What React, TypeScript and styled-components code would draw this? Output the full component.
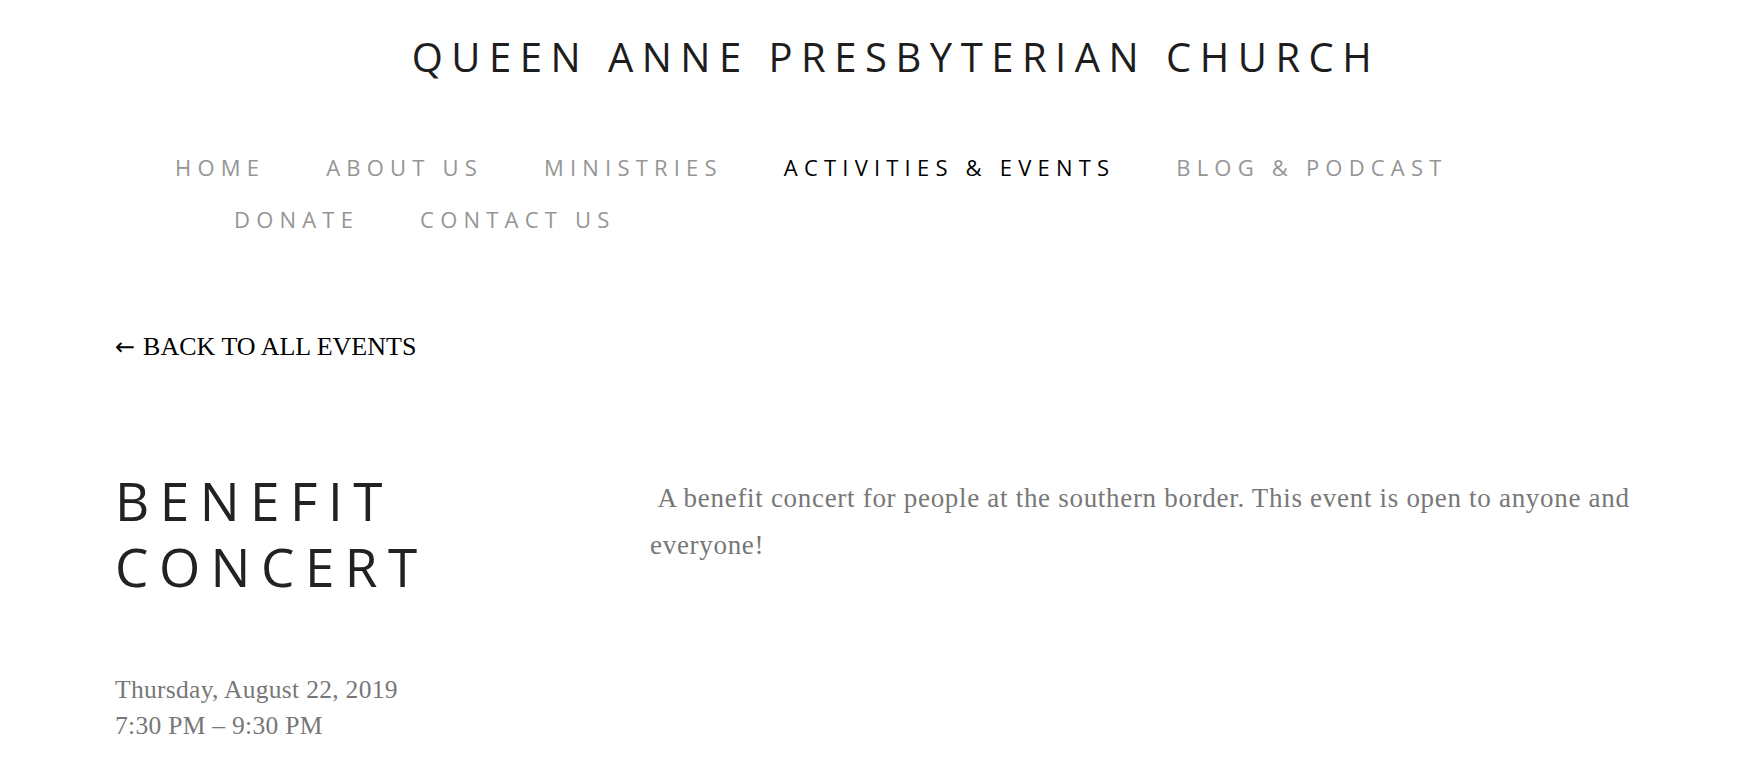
import styled, { createGlobalStyle } from 'styled-components';

const GlobalStyle = createGlobalStyle`
  body {
    margin: 0;
    background: #fff;
    font-family: "Liberation Serif", serif;
  }
`;

const sans = `"Open Sans", "Noto Sans", sans-serif`;

const Page = styled.div`
  box-sizing: border-box;
  min-height: 768px;
  padding: 37px 0 0 115px;
`;

const SiteTitle = styled.h1`
  margin: 0;
  padding-left: 42px;
  padding-right: 115px;
  text-align: center;
  font-family: ${sans};
  font-weight: 500;
  font-size: 40px;
  line-height: 39px;
  letter-spacing: 8.5px;
  color: #1d1d1d;
`;

const Nav = styled.nav`
  margin-top: 65px;
  display: flex;
  flex-direction: column;
`;

const NavRow = styled.div<{ $indent: number }>`
  display: flex;
  gap: 61px;
  padding-left: ${({ $indent }) => $indent}px;
`;

const NavLink = styled.a<{ $active?: boolean }>`
  font-family: ${sans};
  font-weight: 500;
  font-size: 22px;
  line-height: 52px;
  letter-spacing: 6.2px;
  text-transform: uppercase;
  text-decoration: none;
  color: ${({ $active }) => ($active ? '#000' : '#959595')};
  cursor: pointer;
`;

const BackLink = styled.a`
  display: block;
  margin-top: 86px;
  font-size: 26px;
  line-height: 31px;
  color: #000;
  text-decoration: none;
`;

const Arrow = styled.span`
  font-family: "DejaVu Sans", sans-serif;
  font-size: 24px;
  margin-right: 8px;
`;

const EventLayout = styled.div`
  margin-top: 105px;
  display: grid;
  grid-template-columns: 535px 1010px;
`;

const EventTitle = styled.h2`
  margin: 0;
  font-family: ${sans};
  font-weight: 500;
  font-size: 53px;
  line-height: 66px;
  letter-spacing: 10.5px;
  text-transform: uppercase;
  color: #222;
`;

const EventMeta = styled.div`
  margin-top: 72px;
  font-size: 25.5px;
  line-height: 36px;
  letter-spacing: 0.3px;
  color: #777;
`;

const Description = styled.p`
  margin: 0;
  padding-top: 7px;
  font-size: 27px;
  line-height: 47px;
  letter-spacing: 0.7px;
  color: #777;
`;

const navRows = [
  { indent: 60, items: ['Home', 'About Us', 'Ministries', 'Activities & Events', 'Blog & Podcast'] },
  { indent: 119, items: ['Donate', 'Contact Us'] },
];

const App = () => {
  return (
    <>
      <GlobalStyle />
      <Page>
        <SiteTitle>QUEEN ANNE PRESBYTERIAN CHURCH</SiteTitle>
        <Nav>
          {navRows.map((row) => (
            <NavRow key={row.indent} $indent={row.indent}>
              {row.items.map((item) => (
                <NavLink key={item} $active={item === 'Activities & Events'}>
                  {item}
                </NavLink>
              ))}
            </NavRow>
          ))}
        </Nav>
        <BackLink>
          <Arrow>←</Arrow>BACK TO ALL EVENTS
        </BackLink>
        <EventLayout>
          <div>
            <EventTitle>
              Benefit
              <br />
              Concert
            </EventTitle>
            <EventMeta>
              <div>Thursday, August 22, 2019</div>
              <div>7:30 PM – 9:30 PM</div>
            </EventMeta>
          </div>
          <Description>
            &nbsp;A benefit concert for people at the southern border. This event is open to anyone and everyone!
          </Description>
        </EventLayout>
      </Page>
    </>
  );
};

export default App;
